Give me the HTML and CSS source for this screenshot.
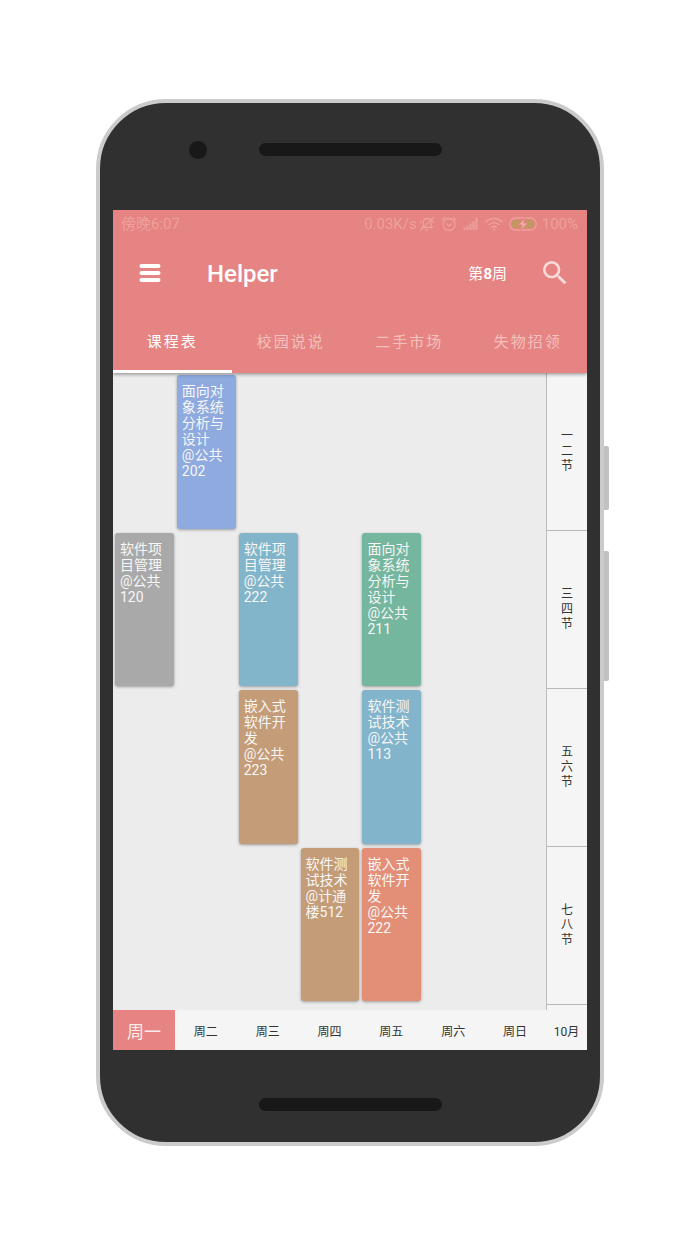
FILE: index.html
```html
<!DOCTYPE html>
<html lang="zh-CN">
<head>
<meta charset="utf-8">
<meta name="viewport" content="width=device-width, initial-scale=1">
<title>Helper</title>
<link rel="stylesheet" href="styles.css">
</head>
<body>
<div class="phone">
  <span class="side-key power"></span>
  <span class="side-key volume"></span>
  <div class="bezel bezel-top">
    <span class="camera"></span>
    <span class="speaker"></span>
  </div>
  <main class="screen">
    <header class="app-header">
      <div class="status">
        <span class="clock">傍晚6:07</span>
        <span>0.03K/s</span>
        <svg class="status-icon mute" viewBox="0 0 16 16" width="16" height="16"><path d="M3 11.5h10.5l-1.6-2V6.2C11.900 3.800 10.200 2.500 8 2.500S4.400 3.800 4.400 6.200v3.300L3 11.500M6.500 13.800h3M1 14.800L14.500 1.200M13 4.500l2 2M1.500 5.500l1.200 1.200"/></svg>
        <svg class="status-icon alarm" viewBox="0 0 16 16" width="16" height="16"><circle cx="8" cy="8.500" r="6"/><path d="M5.500 7.500L8 10l2.800-2.500M1 4.200L4 1.200M15 4.200L12 1.200"/></svg>
        <svg class="status-icon signal" viewBox="0 0 15 14" width="15" height="14"><path d="M1.500 10.500V13M4.500 8.500V13M7.500 6.500V13M10.500 4V13M13.500 1V13"/></svg>
        <svg class="status-icon wifi" viewBox="0 0 20 16" width="20" height="16"><path d="M1.500 6.200C6.200 1.300 13.800 1.300 18.500 6.200M4.500 9C7.600 5.900 12.400 5.900 15.500 9M7.400 11.600C8.900 10.200 11.100 10.200 12.600 11.600"/><circle class="dot" cx="10" cy="13.600" r="1.200"/></svg>
        <svg class="status-icon battery" viewBox="0 0 28 14" width="28" height="14"><rect class="shell" x="0.700" y="1" width="26.600" height="12" rx="6"/><rect class="charge" x="2.500" y="3" width="23" height="8" rx="4"/><path class="bolt" d="M16.500 0.500L9 8h4l-2 5.500L19 6h-4.500z"/></svg>
        <span>100%</span>
      </div>
      <div class="toolbar">
        <button class="icon-button" type="button" aria-label="菜单">
          <svg viewBox="0 0 22 20" width="22" height="20"><path class="menu-bars" d="M2.500 3h17M2.500 10h17M2.500 17h17"/></svg>
        </button>
        <h1 class="title">Helper</h1>
        <button class="week" type="button">第<strong>8</strong>周</button>
        <button class="icon-button search" type="button" aria-label="搜索">
          <svg viewBox="0 0 24 24" width="32" height="32"><path d="M15.500 14h-.79l-.28-.27A6.470 6.470 0 0 0 16 9.500 6.500 6.500 0 1 0 9.500 16c1.610 0 3.090-.59 4.230-1.570l.27.28v.79l5 4.990L20.490 19l-4.990-5zm-6 0C7.010 14 5 11.990 5 9.500S7.010 5 9.500 5 14 7.010 14 9.500 11.990 14 9.500 14z"/></svg>
        </button>
      </div>
      <nav class="tabs">
        <a class="tab active" href="#schedule" aria-current="page">课程表</a>
        <a class="tab" href="#talk">校园说说</a>
        <a class="tab" href="#market">二手市场</a>
        <a class="tab" href="#lost">失物招领</a>
      </nav>
    </header>
    <section class="board" id="schedule">
      <div class="lessons">
        <article class="lesson tue first blue"><span>面向对象系统分析与设计</span><span>@公共202</span></article>
        <article class="lesson mon second gray"><span>软件项目管理</span><span>@公共120</span></article>
        <article class="lesson wed second teal"><span>软件项目管理</span><span>@公共222</span></article>
        <article class="lesson fri second green"><span>面向对象系统分析与设计</span><span>@公共211</span></article>
        <article class="lesson wed third tan"><span>嵌入式软件开发</span><span>@公共223</span></article>
        <article class="lesson fri third sky"><span>软件测试技术</span><span>@公共113</span></article>
        <article class="lesson thu fourth tan"><span>软件测试技术</span><span>@计通楼512</span></article>
        <article class="lesson fri fourth coral"><span>嵌入式软件开发</span><span>@公共222</span></article>
      </div>
      <div class="periods">
        <div class="period"><span>一二节</span></div>
        <div class="period"><span>三四节</span></div>
        <div class="period"><span>五六节</span></div>
        <div class="period"><span>七八节</span></div>
      </div>
    </section>
    <footer class="days">
      <div class="week-days">
        <button class="day today" type="button">周一</button>
        <button class="day" type="button">周二</button>
        <button class="day" type="button">周三</button>
        <button class="day" type="button">周四</button>
        <button class="day" type="button">周五</button>
        <button class="day" type="button">周六</button>
        <button class="day" type="button">周日</button>
      </div>
      <span class="month">10月</span>
    </footer>
  </main>
  <div class="bezel bezel-bottom">
    <span class="speaker"></span>
  </div>
</div>
</body>
</html>
```
FILE: styles.css
```css
* {
  box-sizing: border-box;
}

body {
  margin: 0;
  padding: 99px 96px;
  background: #fff;
  font-family: Roboto, "Noto Sans CJK SC", sans-serif;
}

button {
  margin: 0;
  padding: 0;
  border: 0;
  background: none;
  color: inherit;
  font: inherit;
}

/* Device */
.phone {
  position: relative;
  padding: 0 13px;
  border: 4px solid #cbcbcb;
  border-radius: 70px;
  background: #303030;
}

.side-key {
  position: absolute;
  left: calc(100% + 4px);
  width: 5px;
  border-radius: 0 2px 2px 0;
  background: #c1c1c1;
}

.power {
  top: 343px;
  height: 64px;
}

.volume {
  top: 448px;
  height: 130px;
}

.bezel {
  display: grid;
  grid-template-columns: 1fr 183px 1fr;
  align-items: center;
}

.bezel-top {
  height: 107px;
  padding-bottom: 14px;
}

.bezel-bottom {
  height: 92px;
  padding-top: 17px;
}

.camera {
  justify-self: end;
  width: 18px;
  height: 18px;
  margin-right: 52px;
  border-radius: 50%;
  background: #181818;
}

.speaker {
  grid-column: 2;
  height: 13px;
  border-radius: 7px;
  background: #181818;
}

.screen {
  background: #ececec;
}

/* Header */
.app-header {
  position: relative;
  background: #e58482;
  box-shadow: 0 1px 4px rgba(0, 0, 0, 0.45);
  clip-path: inset(0 0 -8px 0);
  color: #fff;
}

.status {
  display: flex;
  align-items: center;
  height: 28px;
  padding: 0 9px 0 8px;
  color: #eea09d;
  font-size: 15px;
  line-height: 28px;
}

.clock {
  margin-right: auto;
}

.status-icon {
  fill: none;
  stroke: currentColor;
  stroke-width: 1.3;
}

.mute {
  margin-left: 2px;
}

.alarm {
  margin-left: 6px;
}

.signal {
  margin-left: 6px;
  stroke-width: 2;
}

.wifi {
  margin-left: 6px;
  stroke-width: 1.6;
}

.wifi .dot {
  fill: currentColor;
  stroke: none;
}

.battery {
  margin: 0 5px;
}

.battery .charge {
  fill: #c29762;
  stroke: none;
}

.battery .bolt {
  fill: #f2aaa6;
  stroke: #e58482;
  stroke-width: 1;
}

.toolbar {
  display: flex;
  align-items: center;
  height: 76px;
  padding: 0 16px 6px 26px;
}

.icon-button {
  display: flex;
}

.menu-bars {
  fill: none;
  stroke: #fff;
  stroke-width: 4;
  stroke-linecap: round;
}

.title {
  margin: 0 auto 0 46px;
  padding-top: 2px;
  font-size: 24px;
  font-weight: 500;
  line-height: 28px;
}

.week {
  margin-right: 32px;
  padding-bottom: 2px;
  font-size: 15px;
}

.search {
  fill: #f9dcda;
}

.tabs {
  display: grid;
  grid-template-columns: repeat(4, 1fr);
  height: 59px;
}

.tab {
  display: flex;
  align-items: center;
  justify-content: center;
  padding-bottom: 3px;
  border-bottom: 3px solid transparent;
  color: #f3c0bd;
  font-size: 15px;
  letter-spacing: 2px;
  text-decoration: none;
}

.tab.active {
  border-bottom-color: #fff;
  color: #fff;
}

/* Timetable */
.board {
  display: grid;
  grid-template-columns: 1fr 41px;
}

.lessons {
  display: grid;
  grid-template-columns: repeat(7, 1fr);
  grid-template-rows: repeat(4, 1fr);
  padding-bottom: 7px;
}

.lesson {
  margin: 2px 1px 2px 2px;
  padding: 8px 5px;
  border-radius: 3px;
  box-shadow: 0 1px 3px rgba(0, 0, 0, 0.35);
  color: #f7f7f7;
  font-size: 14px;
  line-height: 16px;
}

.lesson span {
  display: block;
}

.mon { grid-column: 1; }
.tue { grid-column: 2; }
.wed { grid-column: 3; }
.thu { grid-column: 4; }
.fri { grid-column: 5; }

.first { grid-row: 1; }
.second { grid-row: 2; }
.third { grid-row: 3; }
.fourth { grid-row: 4; }

.blue { background: #8eaadf; }
.gray { background: #a9a9a9; }
.teal { background: #82b5c9; }
.green { background: #75b69f; }
.tan { background: #c49c78; }
.sky { background: #82b4cc; }
.coral { background: #e38f77; }

.periods {
  padding-bottom: 5px;
  border-left: 1px solid #bcbcbc;
  background: #f5f5f5;
}

.period {
  display: flex;
  align-items: center;
  justify-content: center;
  height: 158px;
  border-bottom: 1px solid #b8b8b8;
  color: #333;
  font-size: 12px;
  line-height: 15px;
}

.period span {
  width: 12px;
}

/* Day bar */
.days {
  display: grid;
  grid-template-columns: 1fr 41px;
  height: 40px;
  background: #f5f5f5;
  color: #333;
  font-size: 12px;
}

.week-days {
  display: grid;
  grid-template-columns: repeat(7, 1fr);
}

.day.today {
  background: #e58482;
  color: #fbeceb;
  font-size: 17px;
}

.month {
  align-self: center;
  text-align: center;
}
```
